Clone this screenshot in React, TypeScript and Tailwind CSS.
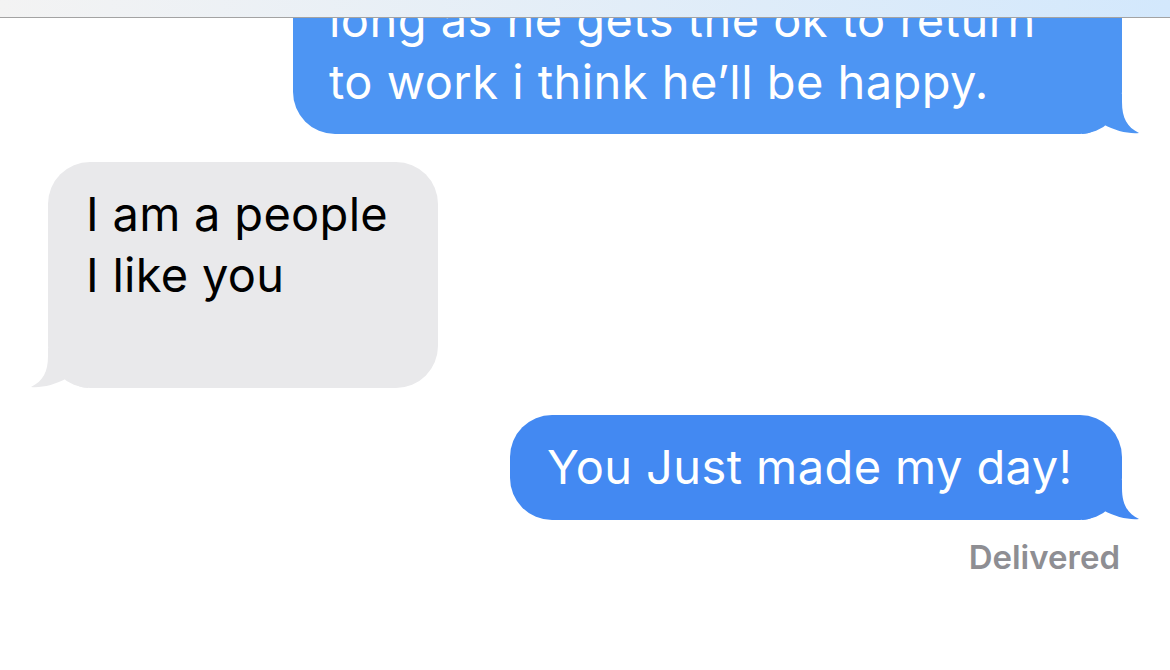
import React from "react";

type Side = "left" | "right";

const Tail = ({ side, color }: { side: Side; color: string }) => (
  <svg
    width="57"
    height="40"
    viewBox="0 0 57 40"
    className={
      side === "right"
        ? "absolute bottom-0 right-[-17px]"
        : "absolute bottom-0 left-[-17px] -scale-x-100"
    }
  >
    <path
      d="M0 0 H40 V8 C40 24 45 33 57 39 C47 40 33 37 21 30 C15 35 8 40 0 40 Z"
      fill={color}
    />
  </svg>
);

const Bubble = ({
  side,
  color,
  className,
  lines,
}: {
  side: Side;
  color: string;
  className: string;
  lines: string[];
}) => (
  <div className={`relative rounded-[42px] ${className}`} style={{ backgroundColor: color }}>
    {lines.map((line, i) => (
      <div key={i} className="whitespace-pre">
        {line || "\u00a0"}
      </div>
    ))}
    <Tail side={side} color={color} />
  </div>
);

export default function App() {
  return (
    <div className="w-[1170px] h-[670px] bg-white flex flex-col overflow-hidden font-['Inter',_'Liberation_Sans',_sans-serif]">
      <header className="h-[18px] shrink-0 bg-gradient-to-r from-[#f3f3f3] to-[#d3e8fc] border-b border-[#a3a3a3] relative z-10" />

      <main className="flex-1 flex flex-col px-12 overflow-hidden">
        <Bubble
          side="right"
          color="#4d95f3"
          className="self-end w-[829px] -mt-[44px] pl-9 pt-[15px] pb-[21px] text-white text-[47px] leading-[62px] tracking-[0.45px]"
          lines={["long as he gets the ok to return", "to work i think he\u2019ll be happy."]}
        />

        <Bubble
          side="left"
          color="#e9e9eb"
          className="self-start w-[390px] mt-[28px] pl-[38px] pt-[21px] pb-[22px] text-black text-[47px] leading-[61px] tracking-[0.3px]"
          lines={["I am a people", "I like you", ""]}
        />

        <Bubble
          side="right"
          color="#4389f2"
          className="self-end w-[612px] mt-[27px] pl-[37px] pt-[21px] pb-[22px] text-white text-[47px] leading-[62px] tracking-[0.4px]"
          lines={["You Just made my day!"]}
        />

        <div className="self-end mt-[13px] pr-[2px] text-[33px] font-semibold text-[#8e8e93]">
          Delivered
        </div>
      </main>
    </div>
  );
}
